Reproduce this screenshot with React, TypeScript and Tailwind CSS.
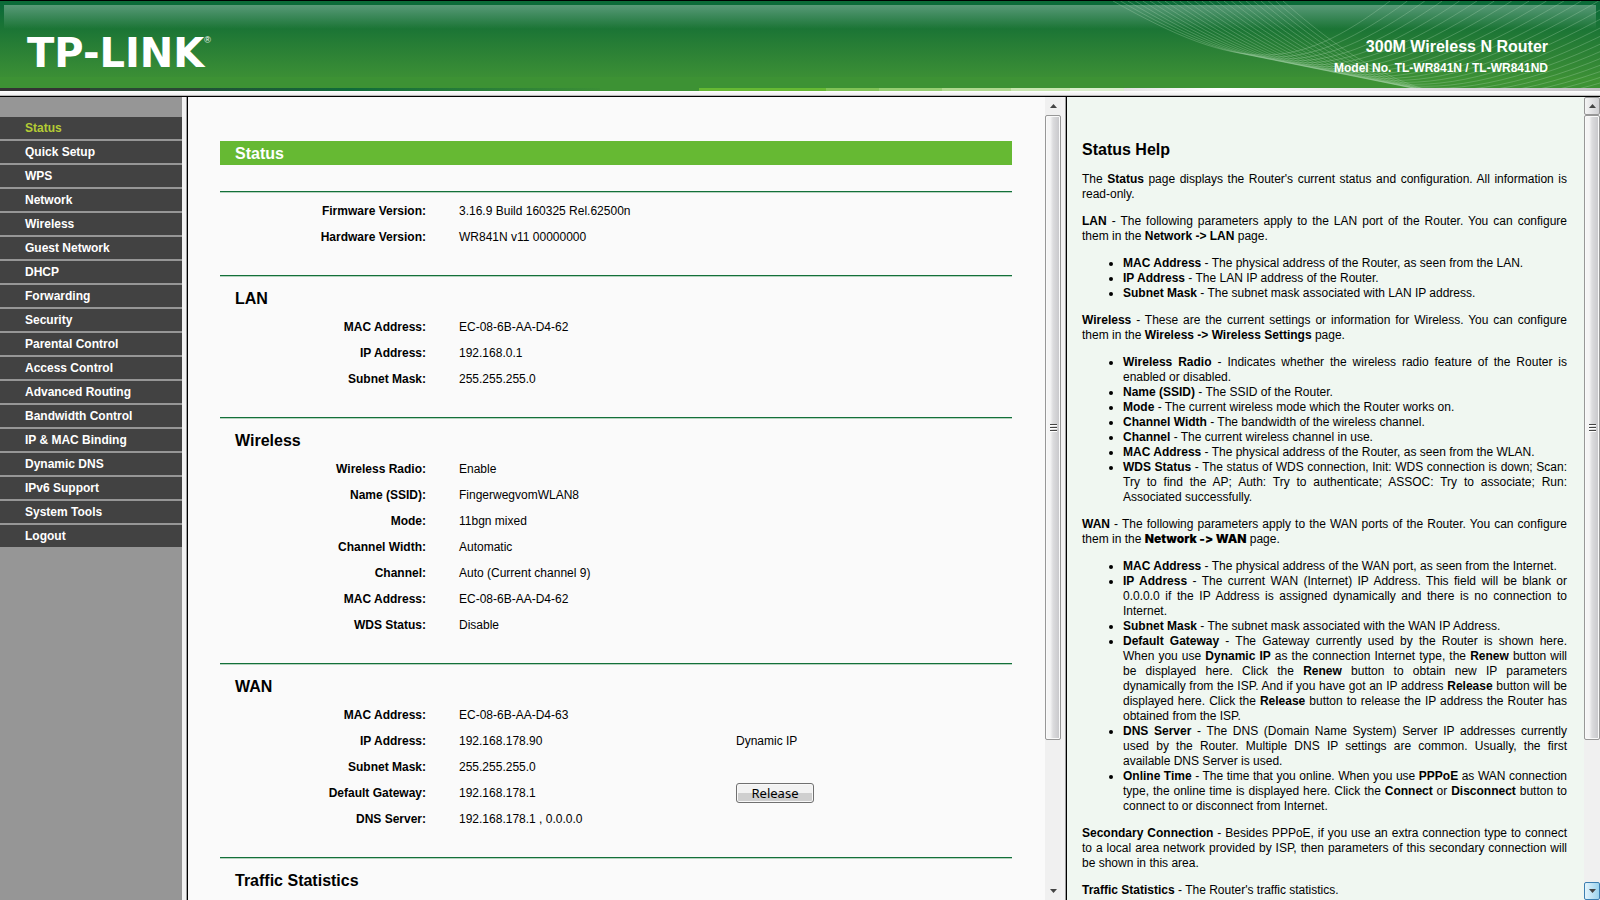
import type { ReactNode } from "react";

const menuItems = [
  "Status", "Quick Setup", "WPS", "Network", "Wireless", "Guest Network",
  "DHCP", "Forwarding", "Security", "Parental Control", "Access Control",
  "Advanced Routing", "Bandwidth Control", "IP & MAC Binding", "Dynamic DNS",
  "IPv6 Support", "System Tools", "Logout",
];

type Row = { label: string; value: string; extra?: ReactNode };
type SectionData = { title?: string; rows: Row[] };

const sections: SectionData[] = [
  {
    rows: [
      { label: "Firmware Version:", value: "3.16.9 Build 160325 Rel.62500n" },
      { label: "Hardware Version:", value: "WR841N v11 00000000" },
    ],
  },
  {
    title: "LAN",
    rows: [
      { label: "MAC Address:", value: "EC-08-6B-AA-D4-62" },
      { label: "IP Address:", value: "192.168.0.1" },
      { label: "Subnet Mask:", value: "255.255.255.0" },
    ],
  },
  {
    title: "Wireless",
    rows: [
      { label: "Wireless Radio:", value: "Enable" },
      { label: "Name (SSID):", value: "FingerwegvomWLAN8" },
      { label: "Mode:", value: "11bgn mixed" },
      { label: "Channel Width:", value: "Automatic" },
      { label: "Channel:", value: "Auto (Current channel 9)" },
      { label: "MAC Address:", value: "EC-08-6B-AA-D4-62" },
      { label: "WDS Status:", value: "Disable" },
    ],
  },
  {
    title: "WAN",
    rows: [
      { label: "MAC Address:", value: "EC-08-6B-AA-D4-63" },
      { label: "IP Address:", value: "192.168.178.90", extra: "Dynamic IP" },
      { label: "Subnet Mask:", value: "255.255.255.0" },
      {
        label: "Default Gateway:",
        value: "192.168.178.1",
        extra: (
          <button
            type="button"
            className="block h-5 w-[78px] rounded-[3px] border border-[#707070] bg-linear-to-b from-[#f2f2f2] from-50% to-[#cfcfcf] to-50% font-['Noto_Sans',sans-serif] text-[13px] leading-[18px] shadow-[inset_0_0_0_1px_#f8f8f8]"
          >
            Release
          </button>
        ),
      },
      { label: "DNS Server:", value: "192.168.178.1 , 0.0.0.0" },
    ],
  },
  { title: "Traffic Statistics", rows: [] },
];

// Fan of curves in the right part of the banner
const waves = Array.from({ length: 24 }, (_, i) => {
  const t = i / 23;
  const depth = 72 + 60 * t;
  return `M${113 + 170 * t} 0C${241 + 190 * t} ${depth} ${295 + 240 * t} ${depth} ${390 + 400 * t} 0`;
});

function Banner() {
  return (
    <header className="shrink-0">
      <div className="relative h-[88px] border-t border-black bg-linear-to-b from-[#0b6b38] from-[5px] via-[#1b7535] via-[28px] to-[#3b8f35] to-[76px]">
        <div className="absolute inset-x-1 top-1 h-6 bg-linear-to-b from-white/32 to-white/0" />
        <div className="absolute inset-x-0 bottom-0 h-[11px] bg-[#3d9234]" />
        <svg className="absolute top-0 right-0" width="500" height="87" viewBox="100 0 500 87" fill="none" aria-hidden="true">
          {waves.map((d) => (
            <path key={d} d={d} stroke="#b9e0bd" strokeOpacity="0.28" />
          ))}
        </svg>
        <div className="relative flex h-full items-center justify-between pr-[52px] pl-[27px]">
          <a href="#home" className="flex pt-[17px] text-white">
            <span className="font-['DejaVu_Sans',sans-serif] text-[40px] leading-10 font-bold">TP-LINK</span>
            <span className="text-[9px] leading-[14px]">®</span>
          </a>
          <div className="pt-[22px] text-right font-bold text-white">
            <div className="text-[16px] leading-6">300M Wireless N Router</div>
            <div className="text-[12px] leading-[18px]">Model No. TL-WR841N / TL-WR841ND</div>
          </div>
        </div>
      </div>
      <div className="flex h-[3px]">
        <div className="w-[90px] bg-[#333333]" />
        <div className="w-[110px] bg-[#2a4734]" />
        <div className="w-[150px] bg-linear-to-r from-[#1f5036] to-[#0f6b39]" />
        <div className="w-[250px] bg-linear-to-r from-[#0f6b39] to-[#3b8f35]" />
        <div className="w-[99px] bg-[#3d9234]" />
        <div className="w-[127px] bg-[#66b933]" />
        <div className="w-[53px] bg-[#80c356]" />
        <div className="w-[63px] bg-[#96ce72]" />
        <div className="w-[69px] bg-[#b0d98f]" />
        <div className="w-[59px] bg-[#c8e6b0]" />
        <div className="w-[54px] bg-[#daeecd]" />
        <div className="flex-1 bg-linear-to-r from-[#e2e2e2] via-white via-20% to-[#c4c2c6]" />
      </div>
      <div className="h-[6px] border-b border-black bg-linear-to-b from-white via-[#f0f0f0] via-70% to-[#a0a0a0]" />
    </header>
  );
}

function Divider() {
  return (
    <div className="flex w-[6px] shrink-0 border-r border-black bg-[#f2f2f2]">
      <div className="ml-auto w-px bg-[#a0a0a0]" />
    </div>
  );
}

function Arrow({ down = false }: { down?: boolean }) {
  return (
    <svg width="7" height="4" viewBox="0 0 7 4" aria-hidden="true">
      <path d={down ? "M0 0H7L3.5 4Z" : "M0 4H7L3.5 0Z"} fill="#444" />
    </svg>
  );
}

function ScrollBar({ framed = false }: { framed?: boolean }) {
  return (
    <div className="flex w-4 shrink-0 flex-col bg-[#f0f0f0]">
      <div
        className={`flex h-[18px] items-center justify-center ${
          framed ? "rounded-[2px] border border-[#979797] bg-linear-to-r from-[#f5f5f5] to-[#d0d0d3]" : ""
        }`}
      >
        <Arrow />
      </div>
      <div className="flex flex-[625] flex-col items-center justify-center gap-px rounded-[2px] border border-[#979797] bg-linear-to-r from-[#f5f5f5] from-30% via-[#dcdcde] via-50% to-[#c6c6c9] shadow-[inset_0_0_0_1px_#fafafa]">
        <div className="h-0.5 w-[7px] border-t border-[#444] bg-white" />
        <div className="h-0.5 w-[7px] border-t border-[#444] bg-white" />
        <div className="h-0.5 w-[7px] border-t border-[#444] bg-white" />
      </div>
      <div className="flex-[142]" />
      <div
        className={`flex h-[18px] items-center justify-center ${
          framed ? "rounded-[2px] border border-[#3c7fb1] bg-linear-to-r from-[#e3f4fc] to-[#9bd3ee]" : ""
        }`}
      >
        <Arrow down />
      </div>
    </div>
  );
}

function Section({ title, rows }: SectionData) {
  return (
    <section className="mb-[25px]">
      <hr className="h-0.5 border-t border-b border-t-[#13703a] border-b-[#b5d3bf]" />
      {title ? (
        <h2 className="pt-3 pb-[5px] pl-[15px] text-[16px] leading-5 font-bold">{title}</h2>
      ) : (
        <div className="h-[5px]" />
      )}
      {rows.length > 0 && (
        <table className="w-full table-fixed border-collapse">
          <colgroup>
            <col className="w-[239px]" />
            <col className="w-[277px]" />
            <col />
          </colgroup>
          <tbody>
            {rows.map((row) => (
              <tr key={row.label} className="h-[26px]">
                <th scope="row" className="p-0 pr-[33px] text-right font-bold">{row.label}</th>
                <td className="p-0">{row.value}</td>
                <td className="p-0">{row.extra}</td>
              </tr>
            ))}
          </tbody>
        </table>
      )}
    </section>
  );
}

function Help() {
  return (
    <aside className="min-w-0 flex-1 overflow-hidden bg-[#f0f7f1] pt-[43px] pr-[17px] pl-[15px] text-justify leading-[15px] [&_p]:my-3 [&_ul]:my-3 [&_ul]:ml-[41px] [&_ul]:list-disc">
      <h2 className="text-[16px] leading-5 font-bold">Status Help</h2>
      <p>
        The <b>Status</b> page displays the Router's current status and configuration. All information is read-only.
      </p>
      <p>
        <b>LAN</b> - The following parameters apply to the LAN port of the Router. You can configure them in the{" "}
        <b>Network -&gt; LAN</b> page.
      </p>
      <ul>
        <li><b>MAC Address</b> - The physical address of the Router, as seen from the LAN.</li>
        <li><b>IP Address</b> - The LAN IP address of the Router.</li>
        <li><b>Subnet Mask</b> - The subnet mask associated with LAN IP address.</li>
      </ul>
      <p>
        <b>Wireless</b> - These are the current settings or information for Wireless. You can configure them in the{" "}
        <b>Wireless -&gt; Wireless Settings</b> page.
      </p>
      <ul>
        <li><b>Wireless Radio</b> - Indicates whether the wireless radio feature of the Router is enabled or disabled.</li>
        <li><b>Name (SSID)</b> - The SSID of the Router.</li>
        <li><b>Mode</b> - The current wireless mode which the Router works on.</li>
        <li><b>Channel Width</b> - The bandwidth of the wireless channel.</li>
        <li><b>Channel</b> - The current wireless channel in use.</li>
        <li><b>MAC Address</b> - The physical address of the Router, as seen from the WLAN.</li>
        <li>
          <b>WDS Status</b> - The status of WDS connection, Init: WDS connection is down; Scan: Try to find the AP;
          Auth: Try to authenticate; ASSOC: Try to associate; Run: Associated successfully.
        </li>
      </ul>
      <p>
        <b>WAN</b> - The following parameters apply to the WAN ports of the Router. You can configure them in the{" "}
        <b className="font-['Inter',sans-serif] leading-none font-black [font-variant-ligatures:none]">Network -&gt; WAN</b> page.
      </p>
      <ul>
        <li><b>MAC Address</b> - The physical address of the WAN port, as seen from the Internet.</li>
        <li>
          <b>IP Address</b> - The current WAN (Internet) IP Address. This field will be blank or 0.0.0.0 if the IP
          Address is assigned dynamically and there is no connection to Internet.
        </li>
        <li><b>Subnet Mask</b> - The subnet mask associated with the WAN IP Address.</li>
        <li>
          <b>Default Gateway</b> - The Gateway currently used by the Router is shown here. When you use{" "}
          <b>Dynamic IP</b> as the connection Internet type, the <b>Renew</b> button will be displayed here. Click the{" "}
          <b>Renew</b> button to obtain new IP parameters dynamically from the ISP. And if you have got an IP address{" "}
          <b>Release</b> button will be displayed here. Click the <b>Release</b> button to release the IP address the
          Router has obtained from the ISP.
        </li>
        <li>
          <b>DNS Server</b> - The DNS (Domain Name System) Server IP addresses currently used by the Router. Multiple
          DNS IP settings are common. Usually, the first available DNS Server is used.
        </li>
        <li>
          <b>Online Time</b> - The time that you online. When you use <b>PPPoE</b> as WAN connection type, the online
          time is displayed here. Click the <b>Connect</b> or <b>Disconnect</b> button to connect to or disconnect from
          Internet.
        </li>
      </ul>
      <p>
        <b>Secondary Connection</b> - Besides PPPoE, if you use an extra connection type to connect to a local area
        network provided by ISP, then parameters of this secondary connection will be shown in this area.
      </p>
      <p>
        <b>Traffic Statistics</b> - The Router's traffic statistics.
      </p>
    </aside>
  );
}

export default function App() {
  return (
    <div className="flex h-screen flex-col overflow-hidden font-['Liberation_Sans',Arial,sans-serif] text-[12px] leading-[15px] text-black">
      <Banner />
      <div className="flex min-h-0 flex-1">
        <nav className="w-[182px] shrink-0 overflow-hidden bg-[#969696] pt-5">
          <ul className="flex flex-col gap-0.5">
            {menuItems.map((item) => (
              <li key={item}>
                <a
                  href="#menu"
                  className={`block bg-[#424242] pl-[25px] leading-[22px] font-bold ${
                    item === "Status" ? "text-[#b5cc34]" : "text-white"
                  }`}
                >
                  {item}
                </a>
              </li>
            ))}
          </ul>
        </nav>
        <Divider />
        <div className="flex min-w-0 flex-[873]">
          <main className="min-w-0 flex-1 overflow-hidden bg-[#fafafa] pt-11 pr-[33px] pl-8">
            <h1 className="mb-[26px] bg-[#66b933] pt-0.5 pl-[15px] text-[16px] leading-[22px] font-bold text-white">Status</h1>
            {sections.map((section, i) => (
              <Section key={i} {...section} />
            ))}
          </main>
          <ScrollBar />
        </div>
        <Divider />
        <div className="flex min-w-0 flex-[533]">
          <Help />
          <ScrollBar framed />
        </div>
      </div>
    </div>
  );
}
